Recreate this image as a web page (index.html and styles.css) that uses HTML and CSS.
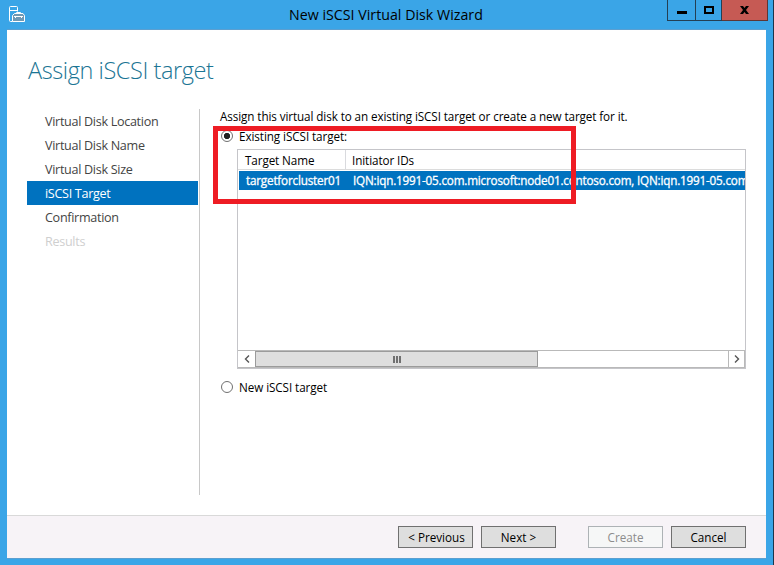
FILE: index.html
```html
<!DOCTYPE html>
<html lang="en">
<head>
<meta charset="utf-8">
<title>New iSCSI Virtual Disk Wizard</title>
<link rel="stylesheet" href="styles.css">
</head>
<body>
<div class="window">
  <header class="titlebar">
    <svg class="app-icon" width="18" height="18" viewBox="0 0 18 18" fill="none" stroke="#fff">
      <path d="M3.500 15.500H1.500Q.5 15.500 .5 14.500V1.500Q.5 .5 1.500 .5H7.500Q8.500 .5 8.500 1.500V5.500M1 4.500H8"/>
      <path d="M3.500 9.500L5.500 7.500H14L15.500 9.500V15.500H3.500Z" fill="#6f99b5"/>
      <path d="M7.500 7.500V6.500H11.500V7.500M5 10.500H14M6.500 10V12M12.500 10V12"/>
    </svg>
    <h1 class="title">New iSCSI Virtual Disk Wizard</h1>
    <div class="controls">
      <button class="ctl min" aria-label="Minimize"><svg width="10" height="8"><path d="M0 4h10v3H0z"/></svg></button>
      <button class="ctl max" aria-label="Maximize"><svg width="10" height="8"><path d="M1 1h8v6H1z" fill="none" stroke="#000" stroke-width="2"/></svg></button>
      <button class="ctl close" aria-label="Close"><svg width="9" height="8"><path d="M0 0h3l1.500 2L6 0h3L6 4l3 4H6L4.500 6 3 8H0l3-4z"/></svg></button>
    </div>
  </header>
  <main class="client">
    <h2 class="heading">Assign iSCSI target</h2>
    <div class="columns">
      <nav class="steps">
        <a class="step">Virtual Disk Location</a>
        <a class="step">Virtual Disk Name</a>
        <a class="step">Virtual Disk Size</a>
        <a class="step current">iSCSI Target</a>
        <a class="step">Confirmation</a>
        <a class="step disabled">Results</a>
      </nav>
      <section class="pane">
        <p class="intro">Assign this virtual disk to an existing iSCSI target or create a new target for it.</p>
        <label class="option existing"><i class="radio on"></i><span>Existing iSCSI target:</span></label>
        <div class="list">
          <div class="row head"><div class="name">Target Name</div><div class="ids">Initiator IDs</div></div>
          <div class="row selected"><div class="name">targetforcluster01</div><div class="ids"><span>IQN:iqn.1991-05.com.microsoft:node01.contoso.com, IQN:iqn.1991-05.com</span></div></div>
          <div class="space"></div>
          <div class="scrollbar">
            <div class="arrow"><svg width="6" height="8"><path d="M5 .5L1.500 4 5 7.500"/></svg></div>
            <div class="thumb"><i></i><i></i><i></i></div>
            <div class="track"></div>
            <div class="arrow right"><svg width="6" height="8"><path d="M1 .5L4.500 4 1 7.500"/></svg></div>
          </div>
        </div>
        <label class="option new"><i class="radio"></i><span>New iSCSI target</span></label>
        <div class="highlight"></div>
      </section>
    </div>
    <footer class="footer">
      <button class="btn prev">&lt; Previous</button>
      <button class="btn next">Next &gt;</button>
      <button class="btn create" disabled>Create</button>
      <button class="btn cancel">Cancel</button>
    </footer>
  </main>
</div>
</body>
</html>
```
FILE: styles.css
```css
* { box-sizing: border-box; }
body {
  margin: 0;
  font: 11.7px/16px "Open Sans", "Noto Sans", sans-serif;
  color: #000;
}
h1, h2, p { margin: 0; font-weight: 400; }
button { font: inherit; padding: 0; margin: 0; }
svg, i { display: block; flex: none; }
h1, h2, span, a, p { white-space: nowrap; }

.window {
  width: 774px;
  height: 565px;
  background: #3aa5e7;
  border-right: 1px solid #1b364b;
  padding: 0 7px;
  overflow: hidden;
}
.titlebar { height: 30px; display: flex; position: relative; border-bottom: 1px solid #5c9fd0; }
.app-icon { margin: 6px 0 0 2px; }
.title {
  position: absolute;
  left: 282px;
  top: 5px;
  font-size: 14.2px;
  line-height: 20px;
  letter-spacing: 0.02px;
}
.controls { display: flex; height: 21px; margin: 0 -2px 0 auto; }
.ctl {
  height: 21px;
  border: 1px solid #243f53;
  border-top: 0;
  background: #3aa5e7;
  display: flex;
  justify-content: center;
  padding-top: 6px;
}
.min { width: 29px; padding-top: 7px; }
.max { width: 26px; border-left: 0; }
.close { width: 46px; border-left: 0; background: #c65a54; border-color: #5e3635; }

.client { width: 759px; height: 529px; background: #fff; display: flex; flex-direction: column; border-bottom: 1px solid #5c9fd0; }
.heading {
  height: 79px;
  padding: 22px 0 0 21px;
  font-size: 23.5px;
  line-height: 36px;
  font-weight: 300;
  letter-spacing: -0.42px;
  color: #1b7594;
}
.columns { height: 406px; display: flex; }
.steps {
  width: 193px;
  height: 386px;
  padding: 0 1px 0 20px;
  border-right: 1px solid #c8c8c8;
  display: flex;
  flex-direction: column;
}
.step { height: 24px; padding: 1px 0 0 18px; line-height: 24px; font-size: 12.6px; letter-spacing: -0.31px; color: #444; }
.current { background: #0072bf; color: #fff; }
.disabled { color: #cfcfcf; }

.pane { position: relative; padding-left: 20px; width: 546px; }
.intro { height: 18px; margin-top: -1px; padding-bottom: 1px; letter-spacing: -0.1px; }
.option { display: flex; align-items: center; gap: 6px; height: 18px; margin-top: 1px; letter-spacing: -0.08px; }
.radio { width: 12px; height: 12px; border: 1px solid #707070; border-radius: 50%; background: #fff; margin-left: 1px; }
.radio.on { background: radial-gradient(circle, #222 0 2.8px, #fff 3.5px); }
.list { width: 509px; height: 220px; margin: 4px 0 0 17px; border: 1px solid #c5c5c9; display: flex; flex-direction: column; }
.row { display: flex; height: 20px; line-height: 21px; overflow: hidden; letter-spacing: -0.1px; }
.head { border-bottom: 1px solid #dcdcdc; margin-bottom: 1px; }
.name { width: 108px; padding-left: 7px; }
.head .name { border-right: 1px solid #d9dade; }
.ids { flex: 1; min-width: 0; padding-left: 6px; overflow: hidden; white-space: nowrap; }
.selected { height: 19px; line-height: 19px; margin-left: 1px; background: #0072bf; color: #fff; letter-spacing: -0.19px; -webkit-text-stroke: 0.3px #fff; }
.selected .name { width: 107px; }
.selected .ids { padding-left: 7px; }
.space { flex: 1; }
.scrollbar { height: 18px; display: flex; border: 1px solid #b9b9b9; border-left: 0; }
.arrow { width: 17px; display: flex; align-items: center; justify-content: center; }
.arrow path { fill: none; stroke: #555; stroke-width: 1.4; }
.thumb { width: 283px; background: #dedede; border: 1px solid #9b9b9b; display: flex; gap: 1px; align-items: center; justify-content: center; }
.thumb i { width: 2px; height: 7px; background: #707070; }
.track { flex: 1; }
.right { border-left: 1px solid #b9b9b9; width: 16px; }
.new { margin-top: 9px; }
.highlight { position: absolute; left: 13px; top: 17px; width: 363px; height: 78px; border: 5px solid #ee1c24; }

.footer { height: 43px; background: #f7f3f7; border-top: 1px solid #d9d9d9; display: flex; padding: 10px 20px 0 391px; }
.btn { width: 75px; height: 22px; border: 1px solid #707070; background: #dedede; color: #000; line-height: 21px; margin-right: 8px; flex: none; }
.prev { padding-left: 2px; }
.next { margin-right: 32px; }
.create { background: #f6f7f7; border-color: #adb2b5; color: #8c8c8c; }
.cancel { margin-right: 0; }
```
